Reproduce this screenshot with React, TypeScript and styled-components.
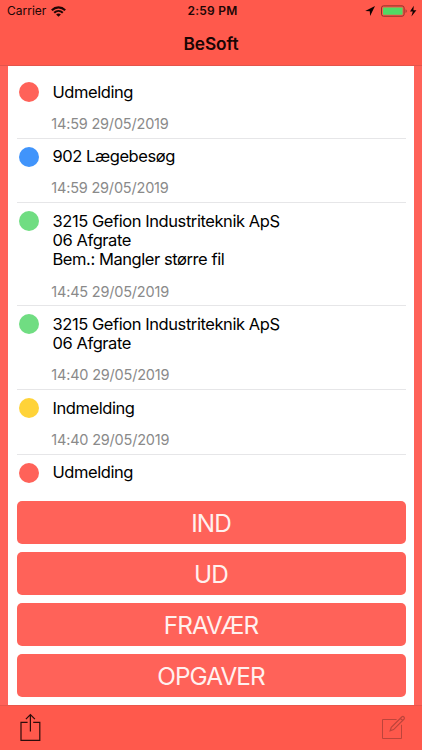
import React from "react";
import styled, { createGlobalStyle } from "styled-components";

const GlobalStyle = createGlobalStyle`
  * { box-sizing: border-box; }
  body { margin: 0; background: #ff6259; }
`;

const Screen = styled.div`
  width: 422px;
  height: 750px;
  display: flex;
  flex-direction: column;
  overflow: hidden;
  background: #ff6259;
  color: #000;
  font-family: Inter, "Liberation Sans", sans-serif;
`;

const Header = styled.header`
  flex: none;
  height: 66px;
  background: #ff594c;
  border-bottom: 1px solid #e4544b;
`;

const StatusBar = styled.div`
  height: 22px;
  padding: 0 5px 0 7px;
  display: grid;
  grid-template-columns: 1fr auto 1fr;
  align-items: center;
  font-size: 12px;
  line-height: 22px;
  color: #200605;
`;

const Carrier = styled.div`
  display: flex;
  align-items: center;
  gap: 5px;
  letter-spacing: 0;
`;

const Clock = styled.div`
  padding-left: 1px;
  font-weight: 600;
  letter-spacing: 0.25px;
`;

const Indicators = styled.div`
  display: flex;
  justify-content: flex-end;
  align-items: center;
`;

const Title = styled.h1`
  margin: 0;
  height: 44px;
  line-height: 44px;
  text-align: center;
  font-size: 17.3px;
  font-weight: 600;
  letter-spacing: -0.1px;
  color: #1a0504;
`;

const Panel = styled.main`
  flex: 1;
  min-height: 0;
  margin: 0 8px;
  display: flex;
  flex-direction: column;
  background: #fff;
`;

const Log = styled.ul`
  flex: 1;
  min-height: 0;
  margin: 0;
  padding: 8px 8.5px 0 8.5px;
  overflow: hidden;
  list-style: none;
`;

const Entry = styled.li<{ $height: number }>`
  height: ${(p) => p.$height}px;
  padding: 8px 0 0 2.5px;
  display: grid;
  grid-template-columns: 20px 1fr;
  column-gap: 13.5px;
  align-items: start;
  border-bottom: 1px solid #e6e6e8;
`;

const Dot = styled.span<{ $color: string }>`
  width: 20px;
  height: 20px;
  border-radius: 50%;
  background: ${(p) => p.$color};
`;

const Details = styled.div`
  padding-top: 0.7px;
  white-space: nowrap;
`;

const Line = styled.div`
  font-size: 16.5px;
  line-height: 19.3px;
  letter-spacing: -0.43px;
`;

const Stamp = styled.time`
  display: block;
  margin: 13px 0 0 -1.2px;
  font-size: 14.5px;
  line-height: 18px;
  letter-spacing: -0.2px;
  color: #8a8a8a;
`;

const Actions = styled.div`
  flex: none;
  padding: 0 8.5px 7.5px 8.5px;
  display: grid;
  gap: 8px;
`;

const ActionButton = styled.button`
  height: 43px;
  padding: 1px 0 0;
  border: 0;
  border-radius: 5px;
  background: #ff6259;
  color: #fff1ef;
  font: 400 24.3px/42px Inter, "Liberation Sans", sans-serif;
  letter-spacing: -0.9px;
`;

const Toolbar = styled.footer`
  flex: none;
  height: 45.5px;
  padding: 0 16px 0 19px;
  display: flex;
  justify-content: space-between;
  background: #ff594c;
  border-top: 1px solid #e9564b;
`;

const ToolButton = styled.button<{ $dim?: boolean }>`
  padding: 7px 0 0;
  border: 0;
  display: flex;
  align-items: flex-start;
  background: none;
  color: ${(p) => (p.$dim ? "#bd443b" : "#2c0d0b")};
`;

const RED = "#ff6259";
const BLUE = "#4094fb";
const GREEN = "#70dd82";
const YELLOW = "#ffd338";

const entries = [
  { color: RED, lines: ["Udmelding"], stamp: "14:59 29/05/2019", height: 64.5 },
  { color: BLUE, lines: ["902 Lægebesøg"], stamp: "14:59 29/05/2019", height: 64.5 },
  {
    color: GREEN,
    lines: ["3215 Gefion Industriteknik ApS", "06 Afgrate", "Bem.: Mangler større fil"],
    stamp: "14:45 29/05/2019",
    height: 103,
  },
  {
    color: GREEN,
    lines: ["3215 Gefion Industriteknik ApS", "06 Afgrate"],
    stamp: "14:40 29/05/2019",
    height: 84,
  },
  { color: YELLOW, lines: ["Indmelding"], stamp: "14:40 29/05/2019", height: 64.5 },
  { color: RED, lines: ["Udmelding"], height: 64.5 },
];

const actions = ["IND", "UD", "FRAVÆR", "OPGAVER"];

const WifiIcon = () => (
  <svg width="15" height="11" viewBox="0 0 15 11" fill="none" stroke="currentColor" strokeWidth="2.1">
    <path d="M0.8 4.2C4.7 0.4 10.3 0.4 14.2 4.2" />
    <path d="M3.2 6.7C5.7 4.4 9.3 4.4 11.8 6.7" />
    <path d="M7.5 10.8L5.1 8.5C6.5 7.2 8.5 7.2 9.9 8.5Z" fill="currentColor" stroke="none" />
  </svg>
);

const StatusIcons = () => (
  <svg width="53" height="14" viewBox="0 0 53 14">
    <path d="M11 2L1.2 6.9L5.8 7.3L6.1 12Z" fill="#100202" />
    <rect x="17.5" y="1.9" width="22.6" height="10.3" rx="2" fill="none" stroke="#8c302a" />
    <rect x="19" y="3.4" width="19.6" height="7.3" rx="0.6" fill="#51d964" />
    <path d="M41.6 5.2C43 5.8 43 8.3 41.6 8.9Z" fill="#8c302a" />
    <path d="M49.8 1.8L46 7.6H48.8L47.4 12.4L52.4 6.2H49.4Z" fill="#100202" />
  </svg>
);

const ShareIcon = () => (
  <svg width="23" height="30" viewBox="0 0 23 30" fill="none" stroke="currentColor" strokeWidth="1.2">
    <path d="M8.6 9.4H2V27.4H20.8V9.4H14.2" />
    <path d="M11.4 18.5V1.6M6.9 6.1L11.4 1.6L15.9 6.1" />
  </svg>
);

const ComposeIcon = () => (
  <svg width="25" height="30" viewBox="0 0 25 30" fill="none" stroke="currentColor" strokeWidth="1">
    <path d="M15.6 6.5H1.5V25.5H20.5V11.8" />
    <path
      d="M9.2 17.8L10.3 14.4L21 3.8C22.2 2.8 24.2 4.7 23.1 6L12.6 16.6ZM19.4 5.4L21.5 7.5"
      strokeWidth="1.2"
    />
  </svg>
);

export default function App() {
  return (
    <>
      <GlobalStyle />
      <Screen>
        <Header>
          <StatusBar>
            <Carrier>
              Carrier
              <WifiIcon />
            </Carrier>
            <Clock>2:59 PM</Clock>
            <Indicators>
              <StatusIcons />
            </Indicators>
          </StatusBar>
          <Title>BeSoft</Title>
        </Header>
        <Panel>
          <Log>
            {entries.map((entry, i) => (
              <Entry key={i} $height={entry.height}>
                <Dot $color={entry.color} />
                <Details>
                  {entry.lines.map((line) => (
                    <Line key={line}>{line}</Line>
                  ))}
                  {entry.stamp && <Stamp>{entry.stamp}</Stamp>}
                </Details>
              </Entry>
            ))}
          </Log>
          <Actions>
            {actions.map((label) => (
              <ActionButton key={label}>{label}</ActionButton>
            ))}
          </Actions>
        </Panel>
        <Toolbar>
          <ToolButton aria-label="Share">
            <ShareIcon />
          </ToolButton>
          <ToolButton aria-label="Compose" $dim>
            <ComposeIcon />
          </ToolButton>
        </Toolbar>
      </Screen>
    </>
  );
}
